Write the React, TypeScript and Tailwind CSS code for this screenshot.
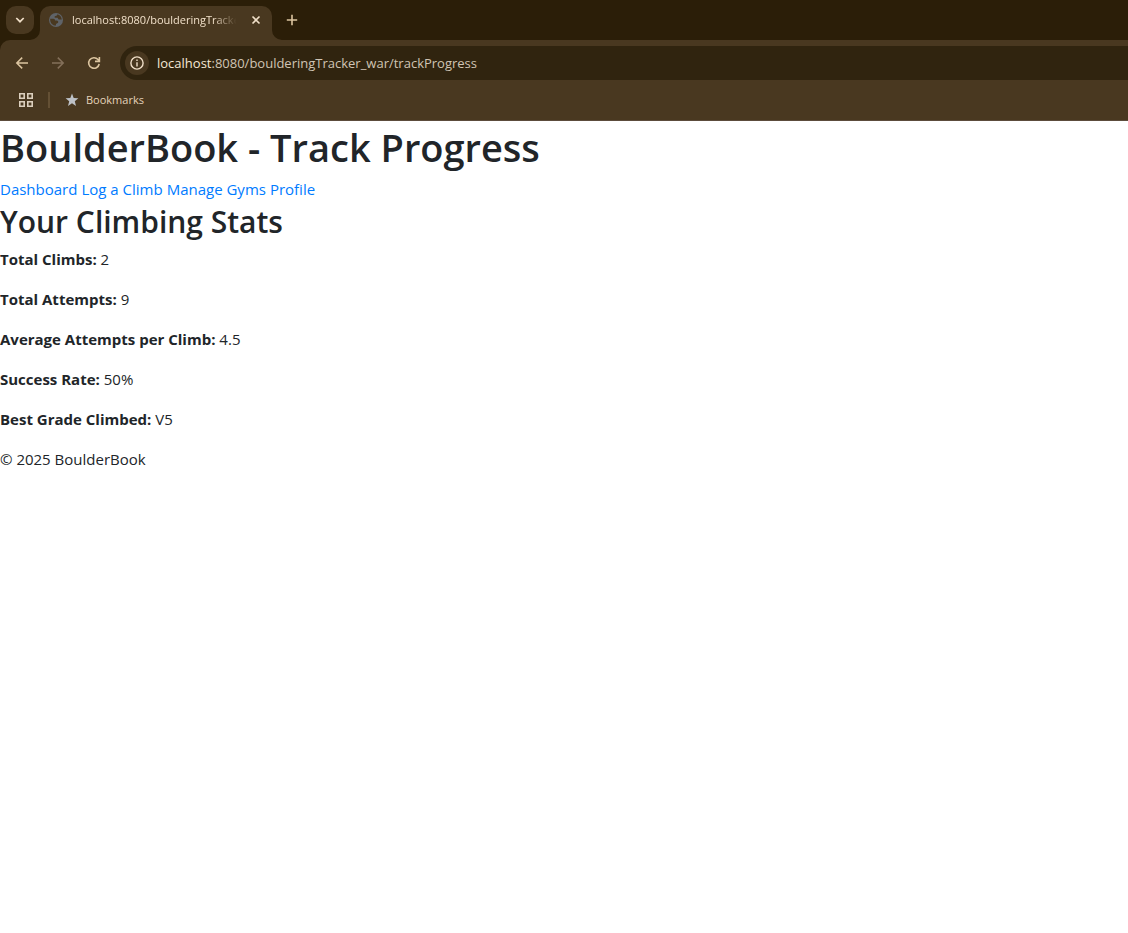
import React from "react";

const stats = [
  { label: "Total Climbs:", value: "2" },
  { label: "Total Attempts:", value: "9" },
  { label: "Average Attempts per Climb:", value: "4.5" },
  { label: "Success Rate:", value: "50%" },
  { label: "Best Grade Climbed:", value: "V5" },
];

const links = ["Dashboard", "Log a Climb", "Manage Gyms", "Profile"];

function Globe() {
  return (
    <svg className="size-4 shrink-0" viewBox="0 0 16 16" aria-hidden="true">
      <circle cx="8" cy="8" r="7" fill="#5f6368" />
      <path
        d="M2.2 6.8 L5.4 6.8 C6.6 6.8 7 7.6 7 8.4 L8.6 8.4 C9.8 8.4 10.4 9.2 10.2 10.2 C10 11.4 8.4 11.4 8 12 L8 13.6 C4.8 13.8 2.2 11 2.2 8 Z"
        fill="#493820"
      />
      <path
        d="M9.4 2.3 C9.2 3.6 8.6 3.8 7.6 4 C6.4 4.2 6.2 5.4 7.2 5.8 L9.4 5.8 C10.2 6 10 7.4 11 7.6 L13.8 7.6 C13.6 5 11.8 2.8 9.4 2.3 Z"
        fill="#493820"
      />
    </svg>
  );
}

function TabStrip() {
  return (
    <div className="flex h-10 items-end bg-[#2b1e08]">
      <button
        type="button"
        aria-label="Search tabs"
        className="mb-1.5 ml-1.5 flex size-7 shrink-0 items-center justify-center rounded-[10px] bg-[#493820]"
      >
        <svg className="size-4" viewBox="0 0 16 16" fill="none" stroke="#f0dfc8" strokeWidth="1.7" aria-hidden="true">
          <path d="M4.3 6 L8 9.7 L11.7 6" />
        </svg>
      </button>
      <div className="relative ml-1.5 flex h-[34px] w-[232px] shrink-0 items-center rounded-t-[10px] bg-[#493820] pb-1.5 pl-2 pr-2">
        <svg className="absolute -left-2.5 bottom-0 size-2.5" viewBox="0 0 10 10" fill="#493820" aria-hidden="true">
          <path d="M10 0 A10 10 0 0 1 0 10 H10 Z" />
        </svg>
        <svg className="absolute -right-2.5 bottom-0 size-2.5" viewBox="0 0 10 10" fill="#493820" aria-hidden="true">
          <path d="M0 0 A10 10 0 0 0 10 10 H0 Z" />
        </svg>
        <Globe />
        <span className="ml-2 min-w-0 flex-1 overflow-hidden whitespace-nowrap text-[11px] leading-4 text-[#f0dfc8] [mask-image:linear-gradient(to_right,black_84%,transparent_98%)]">
          localhost:8080/boulderingTracker
        </span>
        <button type="button" aria-label="Close tab" className="ml-2 flex size-4 shrink-0 items-center justify-center">
          <svg className="size-4" viewBox="0 0 16 16" stroke="#f0dfc8" strokeWidth="1.6" aria-hidden="true">
            <path d="M4.5 4.5 L11.5 11.5 M11.5 4.5 L4.5 11.5" />
          </svg>
        </button>
      </div>
      <button type="button" aria-label="New tab" className="mb-3 ml-3 flex size-4 items-center justify-center">
        <svg className="size-4" viewBox="0 0 16 16" stroke="#dcc5a0" strokeWidth="1.6" aria-hidden="true">
          <path d="M8 2.8 V13.2 M2.8 8 H13.2" />
        </svg>
      </button>
    </div>
  );
}

function Toolbar() {
  return (
    <div className="flex items-center pt-1.5">
      <div className="flex gap-5 pl-3.5 pr-[18px]">
        <button type="button" aria-label="Back">
          <svg className="block size-4" viewBox="0 0 16 16" fill="none" stroke="#dcc5a0" strokeWidth="1.5" aria-hidden="true">
            <path d="M14 8 H3 M8.2 2.6 L2.8 8 L8.2 13.4" />
          </svg>
        </button>
        <button type="button" aria-label="Forward">
          <svg className="block size-4" viewBox="0 0 16 16" fill="none" stroke="#84705a" strokeWidth="1.5" aria-hidden="true">
            <path d="M2 8 H13 M7.8 2.6 L13.2 8 L7.8 13.4" />
          </svg>
        </button>
        <button type="button" aria-label="Reload">
          <svg className="block size-4" viewBox="0 0 16 16" fill="none" stroke="#dcc5a0" strokeWidth="1.6" aria-hidden="true">
            <path d="M13.2 9 A5.3 5.3 0 1 1 12 4.5 L13.3 5.8 M13.4 2 V6.4 H9" />
          </svg>
        </button>
      </div>
      <div className="flex h-[34px] min-w-0 flex-1 items-center rounded-l-full bg-[#30240f] pl-[5px] text-[13px] leading-5">
        <button type="button" aria-label="View site information" className="flex size-6 shrink-0 items-center justify-center rounded-full bg-[#493820]">
          <svg className="size-4" viewBox="0 0 16 16" fill="none" stroke="#f0dfc8" strokeWidth="1.4" aria-hidden="true">
            <circle cx="8" cy="8" r="6.1" />
            <path d="M8 7.2 V11.4 M8 4.6 V6.1" />
          </svg>
        </button>
        <span className="ml-2 whitespace-nowrap text-[#d0c4b4]">
          <span className="text-[#f5e8d6]">localhost</span>:8080/boulderingTracker_war/trackProgress
        </span>
      </div>
    </div>
  );
}

function BookmarksBar() {
  return (
    <div className="flex h-10 items-center pl-[18px]">
      <button type="button" aria-label="Apps">
        <svg className="block size-4" viewBox="0 0 16 16" fill="none" stroke="#dccfbd" strokeWidth="1.6" aria-hidden="true">
          <path d="M1.8 1.8 H6.2 V6.2 H1.8 Z M9.8 1.8 H14.2 V6.2 H9.8 Z M1.8 9.8 H6.2 V14.2 H1.8 Z M9.8 9.8 H14.2 V14.2 H9.8 Z" />
        </svg>
      </button>
      <span className="ml-3.5 h-4 w-0.5 bg-[#645034]" />
      <button type="button" className="ml-3.5 flex items-center gap-1.5 text-[11px] leading-4 text-[#e4d3ba]">
        <svg className="size-4" viewBox="0 0 16 16" fill="#bdc1c6" aria-hidden="true">
          <path d="M8 1.6 L9.7 6 L14.4 6.3 L10.8 9.3 L12 13.9 L8 11.3 L4 13.9 L5.2 9.3 L1.6 6.3 L6.3 6 Z" />
        </svg>
        Bookmarks
      </button>
    </div>
  );
}

export default function App() {
  return (
    <div className="min-h-screen bg-white font-['Open_Sans','Noto_Sans',sans-serif]">
      <header className="bg-[#2b1e08]">
        <TabStrip />
        <div className="rounded-tl-[10px] border-b border-[#5c4c3c] bg-[#493820]">
          <Toolbar />
          <BookmarksBar />
        </div>
      </header>
      <main className="text-[15px] leading-6 text-[#212529]">
        <h1 className="mb-1 text-[38px] font-semibold leading-[52px]">BoulderBook - Track Progress</h1>
        <nav className="flex flex-wrap gap-x-1 text-[#007bff]">
          {links.map((name) => (
            <a key={name} href="#">{name}</a>
          ))}
        </nav>
        <h2 className="mb-1 text-[30px] font-semibold leading-[42px]">Your Climbing Stats</h2>
        {stats.map(({ label, value }) => (
          <p key={label} className="mb-4">
            <strong className="font-bold">{label}</strong> {value}
          </p>
        ))}
      </main>
      <footer className="text-[15px] leading-6 text-[#212529]">© 2025 BoulderBook</footer>
    </div>
  );
}
